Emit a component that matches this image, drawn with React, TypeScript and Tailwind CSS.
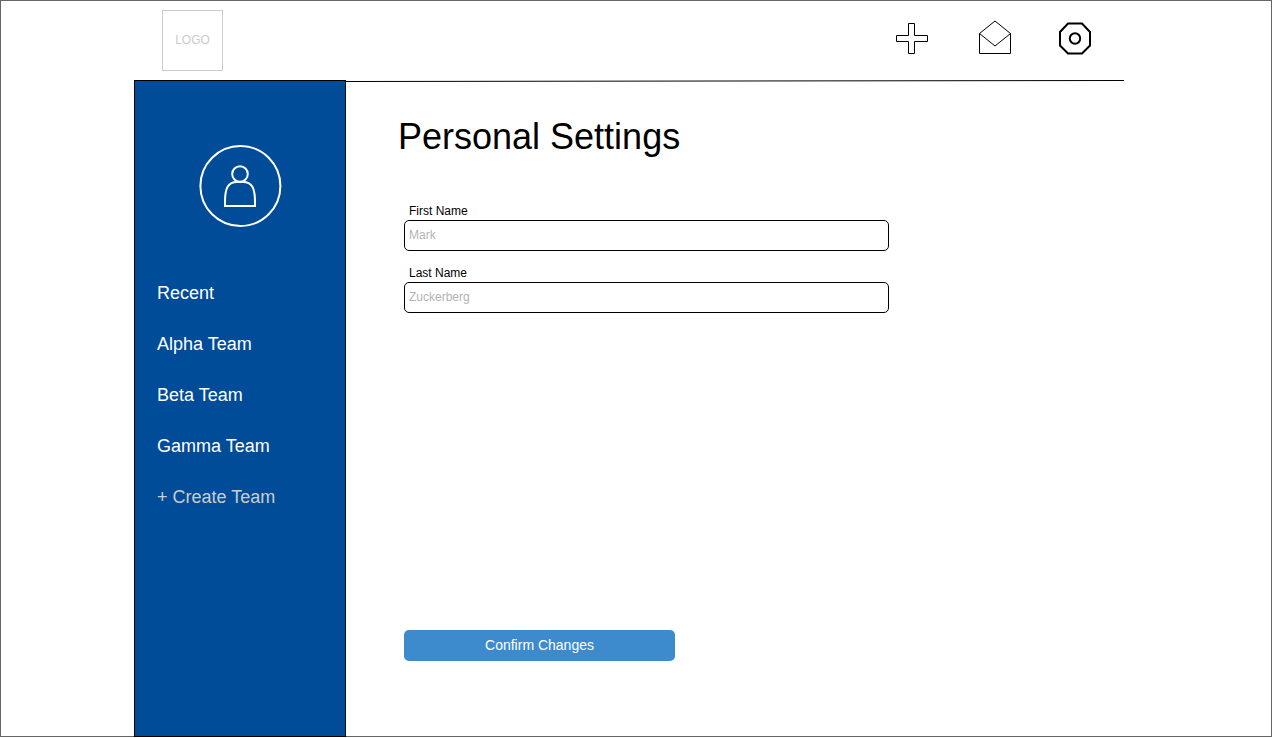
import { useState } from 'react';

const teams = ['Recent', 'Alpha Team', 'Beta Team', 'Gamma Team'];

function PlusIcon() {
  return (
    <svg className="block size-9" viewBox="0 0 36 36" fill="none" stroke="#000" aria-hidden="true">
      <path d="M2.5 15.5H14.5V3.5H20.5V15.5H33.5V21.5H20.5V33.5H14.5V21.5H2.5Z" />
    </svg>
  );
}

function MailIcon() {
  return (
    <svg className="block size-9" viewBox="0 0 36 36" fill="none" stroke="#000" aria-hidden="true">
      <path d="M3.5 13.5V33.5H34.5V13.5L19 26ZM3.5 13.5L19 1L34.5 13.5" />
    </svg>
  );
}

function SettingsIcon() {
  return (
    <svg className="block size-9" viewBox="0 0 36 36" fill="none" stroke="#000" strokeWidth="2" aria-hidden="true">
      <path d="M10 3.5H24L32 12V25.5L24 33.5H10L2 25.5V12Z" />
      <circle cx="17" cy="18.5" r="5.2" />
    </svg>
  );
}

function Avatar() {
  return (
    <svg className="mx-auto block size-[82px] overflow-visible" viewBox="0 0 82 82" fill="none" stroke="#fff" strokeWidth="2" role="img" aria-label="Profile">
      <circle cx="41.4" cy="41" r="40" />
      <circle cx="41" cy="29" r="7.8" />
      <path d="M26 61V57C26 43 29 37 38 37H44C53 37 56 43 56 57V61Z" />
    </svg>
  );
}

function Field({ id, label, placeholder }: { id: string; label: string; placeholder: string }) {
  const [value, setValue] = useState('');
  return (
    <div>
      <label htmlFor={id} className="block pl-[5px] text-xs leading-[18px] text-black">
        {label}
      </label>
      <input
        id={id}
        type="text"
        value={value}
        onChange={(e) => setValue(e.target.value)}
        placeholder={placeholder}
        className="block h-[31px] w-full rounded-[5px] border border-black bg-white px-1 pb-0.5 text-xs text-black placeholder:text-[#b3b3b3]"
      />
    </div>
  );
}

export default function App() {
  return (
    <div className="flex min-h-screen bg-white pr-px pb-px font-['Liberation_Sans',Arial,sans-serif] text-black">
      <div className="flex grow border border-[#666] pr-3.5">
        <div className="mx-auto -mb-px flex w-full max-w-[990px] flex-col">
          <header className="flex items-start justify-between pr-[30px] pb-[9px] pl-7">
            <a
              href="#home"
              className="mt-[9px] flex size-[61px] items-center justify-center border border-[#ccc] pb-0.5 text-xs text-[#ccc]"
            >
              LOGO
            </a>
            <nav aria-label="Actions" className="mt-[19px] flex gap-[46px]">
              <button type="button" aria-label="Add">
                <PlusIcon />
              </button>
              <button type="button" aria-label="Messages">
                <MailIcon />
              </button>
              <button type="button" aria-label="Settings">
                <SettingsIcon />
              </button>
            </nav>
          </header>

          <div className="flex grow">
            <aside className="w-[212px] shrink-0 border border-black bg-[#004c99] pt-16">
              <Avatar />
              <nav aria-label="Teams" className="mt-[54px] flex flex-col gap-[27px] px-[22px] text-lg leading-6 text-white">
                {teams.map((team) => (
                  <a key={team} href="#team">
                    {team}
                  </a>
                ))}
                <a href="#create" className="text-[#ccc]">
                  + Create Team
                </a>
              </nav>
            </aside>

            <main className="min-w-0 grow">
              <svg className="block h-0.5 w-full" viewBox="0 0 778 2" preserveAspectRatio="none" aria-hidden="true">
                <path d="M0 1.5L778 0.5" stroke="#000" fill="none" />
              </svg>
              <h1 className="mt-[35px] pl-[52px] text-4xl leading-10">Personal Settings</h1>
              <form className="mt-[45px] pl-[58px]" onSubmit={(e) => e.preventDefault()}>
                <div className="flex max-w-[485px] flex-col gap-[13px]">
                  <Field id="first-name" label="First Name" placeholder="Mark" />
                  <Field id="last-name" label="Last Name" placeholder="Zuckerberg" />
                </div>
                <button
                  type="submit"
                  className="mt-[317px] block h-[31px] w-[271px] rounded-[5px] bg-[#3d8bcd] pb-0.5 text-sm text-white"
                >
                  Confirm Changes
                </button>
              </form>
            </main>
          </div>
        </div>
      </div>
    </div>
  );
}
